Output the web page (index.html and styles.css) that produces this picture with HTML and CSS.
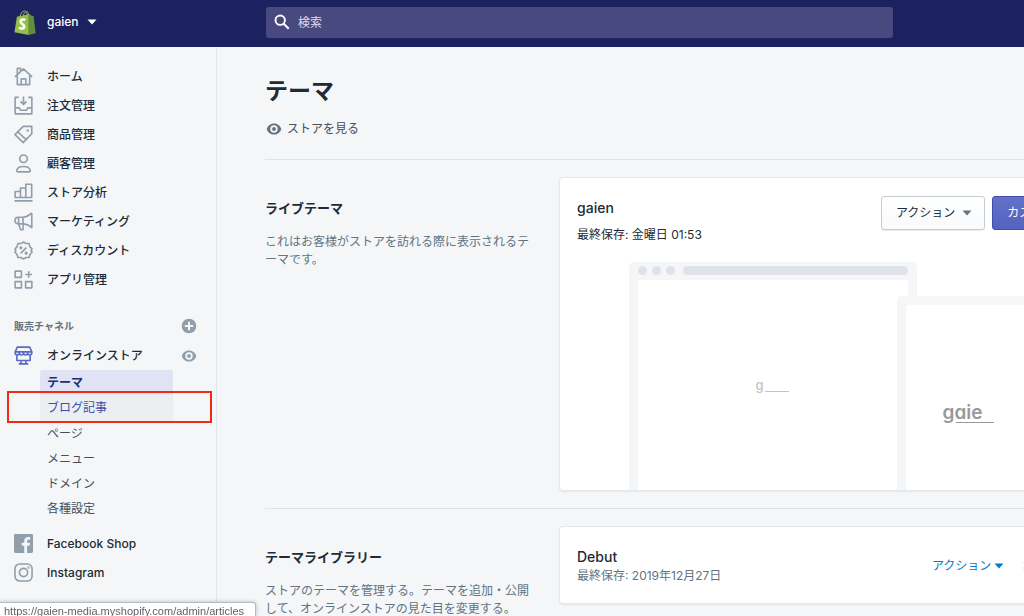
FILE: index.html
```html
<!DOCTYPE html>
<html lang="ja">
<head>
<meta charset="utf-8">
<title>テーマ</title>
<link rel="stylesheet" href="styles.css">
</head>
<body>
<header class="topbar">
  <button class="store" type="button">
    <svg class="store-logo" viewBox="0 0 22 25" aria-hidden="true">
      <path d="M6.2 6.5C6.6 3 8.600.9 10.500.9c2 0 2.700 2.400 2.800 4.800M9.300 6c.3-2.600 1.600-4.300 3.300-4.300 1.300 0 2 1.200 2.300 3.300" fill="none" stroke="#95bf47" stroke-width="1"/>
      <path d="M2.900 6.700 14.800 4.300V25L.4 22.300z" fill="#95bf47"/>
      <path d="m14.800 4.300 1.700.2 1.400 1.400 1.700.2 2 17.200-6.800 1.700z" fill="#5e8e3e"/>
      <path d="M11.300 10c-1.500-.9-4.700-.7-4.700 1.700 0 2.500 3.600 2.400 3.600 4.900 0 2.400-3.200 2.600-5.200.8" fill="none" stroke="#fff" stroke-width="2.600"/>
    </svg>
    <span>gaien</span>
    <svg class="caret" viewBox="0 0 10 6" aria-hidden="true"><path d="M.5.5h9L5 5.500z" fill="currentColor"/></svg>
  </button>
  <label class="search">
    <svg viewBox="0 0 16 16" aria-hidden="true"><circle cx="6.200" cy="6.200" r="4.700" fill="none" stroke="#fff" stroke-width="1.900"/><path d="m9.700 9.700 5 5" stroke="#fff" stroke-width="2.100"/></svg>
    <input type="text" placeholder="検索" aria-label="検索">
  </label>
</header>
<div class="frame">
  <nav class="sidebar">
    <ul class="nav">
      <li><a class="nav-link" href="#"><svg class="icon" viewBox="0 0 20 20"><path d="M3.500 9v9.500h13V9M1 10.300l9-8.300 9 8.300M3.500 7.500v-6H7v2.700M7.500 18.500v-6h5v6"/></svg>ホーム</a></li>
      <li><a class="nav-link" href="#"><svg class="icon" viewBox="0 0 20 20"><path d="M5 1.500H1.200v17.300h17.600V1.500H15M10 .5v8M6.800 5.700 10 8.800l3.200-3.100M1.200 12.500h4.300l1.300 2.500h6.400l1.300-2.500h4.300"/></svg>注文管理</a></li>
      <li><a class="nav-link" href="#"><svg class="icon" viewBox="0 0 20 20"><path d="M9.700 1.500h9v7.700l-9 9.300L1 10.200zM4 7.200l8.800 8.200"/><circle cx="14.500" cy="5.700" r=".5"/></svg>商品管理</a></li>
      <li><a class="nav-link" href="#"><svg class="icon" viewBox="0 0 20 20"><circle cx="10" cy="5" r="4"/><path d="M4 18.800c-1 0-1.300-.7-1.100-1.600.7-2.800 3.500-4 7.100-4s6.400 1.200 7.100 4c.2.900-.1 1.600-1.100 1.600z"/></svg>顧客管理</a></li>
      <li><a class="nav-link" href="#"><svg class="icon" viewBox="0 0 20 20"><path d="M1.200 15.200V9h5.600v6.200zM6.800 15.200V5.200h5.600v10M12.400 15.200V1.300h6.200v13.900H6.800M.5 18.800h19"/></svg>ストア分析</a></li>
      <li><a class="nav-link" href="#"><svg class="icon" viewBox="0 0 20 20"><path d="M18.700 1v15.500c-3-2.800-5.500-4-9.500-4H4.500c-2 0-3.500-1.400-3.500-3.500s1.500-3.500 3.500-3.500h4.700c4 0 6.500-1.600 9.500-4.500M9.500 5.500v13.200H7L4.800 12.500v-7"/></svg>マーケティング</a></li>
      <li><a class="nav-link" href="#"><svg class="icon" viewBox="0 0 20 20"><path d="m10 1 2.700 1.700 3.200.1.800 3.100L19 8.500 18 10l1 1.800-2.300 2.400-.8 3.100-3.200.1L10 19l-2.700-1.600-3.200-.1-.8-3.100L1 11.800 2 10 1 8.500l2.300-2.600.8-3.100 3.200-.1zM7 13l6-6"/><circle cx="7.200" cy="7.200" r=".8"/><circle cx="12.800" cy="12.800" r=".8"/></svg>ディスカウント</a></li>
      <li><a class="nav-link" href="#"><svg class="icon" viewBox="0 0 20 20"><path d="M1.200 1.200h6.600v6.600H1.200zM1.200 12.200h6.600v6.600H1.200zM12.200 12.200h6.600v6.600h-6.600zM15.500 1.200v7M12 4.700h7"/></svg>アプリ管理</a></li>
    </ul>
    <div class="channel-head">
      <h2>販売チャネル</h2>
      <button class="icon-button" type="button" aria-label="追加"><svg viewBox="0 0 16 16"><circle cx="8" cy="8" r="7.300" fill="#919eab"/><path d="M8 3.800v8.400M3.800 8h8.400" stroke="#f4f6f8" stroke-width="2"/></svg></button>
    </div>
    <div class="channel-row">
      <a class="nav-link" href="#"><svg class="icon icon-active" viewBox="0 0 20 20"><path d="M3.500 1.200h13l2.300 5H1.200zM1.200 6.200v1c0 3 4.400 3 4.400 0 0 3 4.400 3 4.400 0 0 3 4.400 3 4.400 0 0 3 4.400 3 4.400 0v-1M3 9.500v5.800h14V9.500M7.500 15.500v3M12.500 15.500v3M5 18.800h10"/></svg>オンラインストア</a>
      <button class="icon-button" type="button" aria-label="ストアを表示"><svg viewBox="0 0 16 16"><path d="M8 2.400C4.200 2.400 1.600 5 .7 8c.9 3 3.500 5.600 7.300 5.600s6.400-2.600 7.300-5.600c-.9-3-3.500-5.600-7.300-5.600" fill="#919eab"/><circle cx="8" cy="8" r="2.800" fill="#919eab" stroke="#f4f6f8" stroke-width="1.800"/></svg></button>
    </div>
    <div class="subnav-wrap">
      <ul class="subnav">
        <li><a class="subnav-link is-current" href="#">テーマ</a></li>
        <li><a class="subnav-link is-hovered" href="#">ブログ記事</a></li>
        <li><a class="subnav-link" href="#">ページ</a></li>
        <li><a class="subnav-link" href="#">メニュー</a></li>
        <li><a class="subnav-link" href="#">ドメイン</a></li>
        <li><a class="subnav-link" href="#">各種設定</a></li>
      </ul>
      <div class="highlight"></div>
    </div>
    <ul class="nav-channels">
      <li><a class="nav-link" href="#"><svg class="brand-icon" viewBox="0 0 20 20"><path d="M1.500 0h17A1.500 1.500 0 0 1 20 1.500v17a1.500 1.500 0 0 1-1.500 1.500h-4.700v-7.700h2.600l.4-3h-3V7.500c0-.9.300-1.500 1.500-1.500H17V3.200c-.3 0-1.200-.1-2.300-.1-2.300 0-3.900 1.400-3.900 4v2.200H8.100v3h2.700V20H1.500A1.500 1.500 0 0 1 0 18.500v-17A1.500 1.500 0 0 1 1.500 0" fill="#919eab"/></svg>Facebook Shop</a></li>
      <li><a class="nav-link" href="#"><svg class="icon" viewBox="0 0 20 20"><rect x="1" y="1" width="18" height="18" rx="5"/><circle cx="10" cy="10" r="4.300"/><circle cx="15.300" cy="4.700" r=".4"/></svg>Instagram</a></li>
    </ul>
  </nav>
  <main class="main">
    <div class="page">
      <div class="page-head">
        <h1>テーマ</h1>
        <a class="view-store" href="#"><svg viewBox="0 0 16 16"><path d="M8 2.400C4.200 2.400 1.600 5 .7 8c.9 3 3.500 5.600 7.300 5.600s6.400-2.600 7.300-5.600c-.9-3-3.500-5.600-7.300-5.600" fill="#637381"/><circle cx="8" cy="8" r="2.800" fill="#637381" stroke="#f4f6f8" stroke-width="1.800"/></svg>ストアを見る</a>
      </div>
      <section class="section">
        <div class="about">
          <h2>ライブテーマ</h2>
          <p>これはお客様がストアを訪れる際に表示されるテーマです。</p>
        </div>
        <div class="card card-live">
          <div class="card-head">
            <div>
              <h3>gaien</h3>
              <p class="saved">最終保存: 金曜日 01:53</p>
            </div>
            <div class="actions">
              <button class="button" type="button">アクション<svg class="caret" viewBox="0 0 10 6"><path d="M.5.5h9L5 5.500z" fill="#637381"/></svg></button>
              <button class="button button-primary" type="button">カスタマイズする</button>
            </div>
          </div>
          <div class="preview">
            <div class="desktop">
              <div class="desktop-bar"><i></i><i></i><i></i><b></b></div>
              <div class="desktop-screen"><span class="mark mark-small">g</span></div>
            </div>
            <div class="phone">
              <div class="phone-screen"><span class="mark mark-large">gaie</span></div>
            </div>
          </div>
        </div>
      </section>
      <section class="section">
        <div class="about">
          <h2>テーマライブラリー</h2>
          <p>ストアのテーマを管理する。テーマを追加・公開して、オンラインストアの見た目を変更する。</p>
        </div>
        <div class="card card-theme">
          <div>
            <h3>Debut</h3>
            <p class="saved">最終保存: 2019年12月27日</p>
          </div>
          <div class="actions actions-plain">
            <button class="link-button" type="button">アクション<svg class="caret" viewBox="0 0 10 6"><path d="M.5.5h9L5 5.500z" fill="currentColor"/></svg></button>
            <button class="link-button" type="button">カスタマイズする</button>
          </div>
        </div>
      </section>
    </div>
  </main>
</div>
<div class="status">https://gaien-media.myshopify.com/admin/articles</div>
</body>
</html>
```
FILE: styles.css
```css
* { box-sizing: border-box; }
body, h1, h2, h3, p, ul { margin: 0; padding: 0; }
ul { list-style: none; }
a { color: inherit; text-decoration: none; }
button { font: inherit; color: inherit; border: 0; padding: 0; background: none; cursor: pointer; }
svg { flex: none; display: block; }

body {
  height: 100vh;
  display: flex;
  flex-direction: column;
  overflow: hidden;
  background: #f4f6f8;
  color: #212b36;
  font: 12px/18px Inter, "Noto Sans CJK JP", sans-serif;
}

.caret { width: 10px; height: 6px; }

.topbar {
  flex: none;
  display: flex;
  align-items: center;
  height: 47px;
  padding: 0 131px 3px 14px;
  background: #1c2260;
}
.store {
  flex: none;
  width: 252px;
  display: flex;
  align-items: center;
  gap: 8px;
  color: #fff;
  font-weight: 500;
}
.store-logo { width: 22px; height: 25px; margin-right: 3px; }
.search {
  flex: 1;
  display: flex;
  align-items: center;
  gap: 8px;
  height: 31px;
  padding: 0 8px;
  border-radius: 3px;
  background: #48497f;
}
.search svg { width: 16px; height: 16px; }
.search input {
  flex: 1;
  min-width: 0;
  padding: 2px 0 0;
  border: 0;
  outline: 0;
  background: none;
  color: #fff;
  font: inherit;
}
.search input::placeholder { color: #dcdcec; opacity: 1; }

.frame { flex: 1; min-height: 0; display: flex; }

.sidebar {
  flex: none;
  width: 217px;
  padding-top: 15px;
  overflow: hidden;
  border-right: 1px solid #e1e5ea;
}
.nav-link {
  display: flex;
  align-items: center;
  gap: 14px;
  height: 29px;
  padding-left: 14px;
  font-weight: 500;
}
.icon { width: 19px; height: 19px; fill: none; stroke: #919eab; stroke-width: 1.7; stroke-linejoin: round; }
.icon-active { stroke: #5c6ac4; }
.brand-icon { width: 19px; height: 19px; }
.channel-head, .channel-row {
  display: flex;
  align-items: center;
  justify-content: space-between;
  padding-right: 19px;
}
.channel-head { height: 30px; margin-top: 17px; padding-left: 14px; }
.channel-head h2 { font-size: 10px; font-weight: 700; color: #637381; }
.icon-button svg { width: 16px; height: 16px; }
.subnav-wrap { position: relative; padding: 0 43px 0 40px; }
.subnav-link { display: block; padding-left: 7px; line-height: 25px; color: #454f5b; }
.is-current { background: #dfe3f3; color: #202e78; font-weight: 700; border-radius: 3px 3px 0 0; }
.is-hovered { line-height: 26px; background: #ebeff2; color: #3f4eae; }
.highlight {
  position: absolute;
  left: 7px;
  right: 4px;
  top: 21px;
  height: 32px;
  border: 2px solid #f12b12;
  pointer-events: none;
}
.nav-channels { margin-top: 8px; }

.main { flex: 1; min-width: 0; overflow: hidden; padding: 0 48px; }
.page { min-width: 871px; }
.page-head { padding: 28px 0 21px; }
.page-head h1 { font-size: 23px; line-height: 32px; font-weight: 700; }
.view-store { display: inline-flex; align-items: center; gap: 5px; margin: 13px 0 0 1px; color: #454f5b; vertical-align: top; }
.view-store svg { width: 16px; height: 16px; }

.section {
  display: flex;
  gap: 27px;
  padding: 18px 0;
  border-top: 1px solid #dfe3e8;
}
.about { flex: none; width: 268px; padding-top: 20px; }
.about h2 { font-size: 13px; line-height: 20px; font-weight: 700; }
.about p { margin-top: 15px; color: #637381; line-break: normal; }

.card {
  flex: 1;
  border-radius: 3px;
  background: #fff;
  box-shadow: 0 0 0 1px #e4e8ec, 0 1px 2px #c9ced4;
}
.card h3 { font-size: 14px; font-weight: 500; }
.card-live { padding: 18px 18px 0 17px; }
.card-live h3 { line-height: 24px; }
.card-head { display: flex; justify-content: space-between; align-items: flex-start; }
.card-live .saved { margin-top: 6px; }
.actions { display: flex; gap: 7px; }
.button {
  display: flex;
  align-items: center;
  gap: 7px;
  height: 34px;
  padding: 0 12px 0 14px;
  border: 1px solid #c4cdd5;
  border-radius: 3px;
  background: linear-gradient(#fff, #f9fafb);
  box-shadow: 0 1px 0 #e8ebee;
}
.button-primary { padding: 0 14px; border-color: #3f4eae; background: linear-gradient(#6371c7, #5563c1); color: #fff; box-shadow: none; }

.preview { display: flex; justify-content: center; margin-top: 18px; height: 228px; }
.desktop {
  display: flex;
  flex-direction: column;
  width: 288px;
  padding: 4px 9px 0;
  border-radius: 5px 5px 0 0;
  background: #f4f6f8;
}
.desktop-bar { display: flex; gap: 5px; }
.desktop-bar i { width: 9px; height: 9px; border-radius: 50%; background: #dfe3e8; }
.desktop-bar b { flex: 1; margin-left: 3px; border-radius: 5px; background: #dfe3e8; }
.desktop-screen { flex: 1; margin-top: 5px; padding: 96px 0 0 118px; background: #fff; border-radius: 2px 2px 0 0; }
.phone {
  display: flex;
  width: 170px;
  margin: 34px 0 0 -20px;
  padding: 9px 9px 0;
  border-radius: 5px 5px 0 0;
  background: #f4f6f8;
}
.phone-screen { flex: 1; padding: 95px 0 0 37px; background: #fff; border-radius: 2px 2px 0 0; }
.mark { position: relative; display: inline-block; font-feature-settings: "cv11"; }
.mark::after { content: ""; position: absolute; height: 1px; background: currentColor; }
.mark-small { color: #c4c4c4; font-size: 13px; font-weight: 500; }
.mark-small::after { left: 9px; width: 24px; bottom: 2px; }
.mark-large { color: #999; font-size: 19px; line-height: 26px; font-weight: 600; }
.mark-large::after { left: 13px; width: 38px; bottom: 3px; }

.card-theme { display: flex; justify-content: space-between; align-items: center; padding: 20px 18px 18px 17px; align-self: flex-start; }
.card-theme h3 { line-height: 20px; }
.card-theme .saved { color: #637381; }
.actions-plain { gap: 18px; }
.link-button { display: flex; align-items: center; gap: 3px; color: #007ace; }

.status {
  position: fixed;
  left: 0;
  bottom: 0;
  width: 256px;
  height: 14px;
  padding-left: 4px;
  border: 1px solid #b9bcbf;
  border-width: 1px 1px 0 0;
  border-radius: 0 3px 0 0;
  background: #fff;
  box-shadow: 0 0 4px #b5b8bb;
  color: #5f6368;
  font: 11px/17px "Liberation Sans", Arial, sans-serif;
  white-space: nowrap;
  overflow: hidden;
}
```
